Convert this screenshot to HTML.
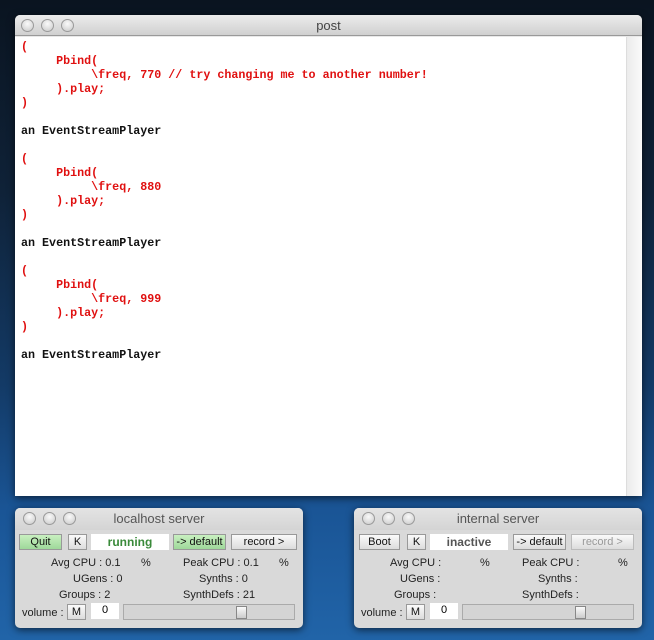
<!DOCTYPE html>
<html><head><meta charset="utf-8"><style>
*{margin:0;padding:0;box-sizing:border-box}
body{width:654px;height:640px;overflow:hidden;position:relative;font-family:"Liberation Sans",sans-serif;
background:linear-gradient(180deg,#0a1420 0%,#0f2238 30%,#133a66 60%,#1a5596 80%,#2164a8 100%);}
.win{position:absolute;background:#e8e8e8;border-radius:5px 5px 0 0;box-shadow:0 2px 8px rgba(0,0,0,.6)}
.tb{position:absolute;left:0;right:0;top:0;height:21px;background:linear-gradient(#ececec,#d0d0d0);border-radius:5px 5px 0 0;border-bottom:1px solid #999;text-align:center;font-size:13px;color:#444;line-height:21px}
.dot{position:absolute;top:4px;width:13px;height:13px;border-radius:50%;background:radial-gradient(circle at 50% 35%,#fafafa,#c8c8c8);border:1px solid #9a9a9a}
.code{position:absolute;left:0;top:22px;width:611px;bottom:0;background:#fff;font-family:"Liberation Mono",monospace;font-weight:bold;font-size:11.7px;line-height:14px;padding:3px 0 0 6px;white-space:pre}
.r{color:#e01010}.k{color:#111}
.sb{position:absolute;right:0;top:22px;width:16px;bottom:0;background:linear-gradient(90deg,#ececec,#fafafa);border-left:1px solid #ddd}
.srv{background:#d9d9d9;border-radius:5px;height:120px;width:288px}
.srv .tb{background:linear-gradient(#e4e4e4,#d4d4d4);border:none;height:22px;line-height:22px;font-size:13px;color:#555}
.b{position:absolute;height:16px;font-size:11px;line-height:15px;text-align:center;background:linear-gradient(#fafafa,#dcdcdc);border:1px solid #999;color:#111}
.g{background:linear-gradient(#c8f0c0,#9ed89a)}
.f{position:absolute;height:16px;background:#fff;font-size:12px;font-weight:bold;text-align:center;line-height:16px}
.t{position:absolute;font-size:11px;color:#222;line-height:12px}
.sl{position:absolute;height:16px;border:1px solid #aaa;background:#d4d4d4}
.kn{position:absolute;top:1px;width:11px;height:13px;background:linear-gradient(#fafafa,#ccc);border:1px solid #888}
</style></head><body>
<div class="win" style="left:15px;top:15px;width:627px;height:481px">
<div class="tb">post<span class="dot" style="left:6px"></span><span class="dot" style="left:26px"></span><span class="dot" style="left:46px"></span></div>
<div class="code"><span class="r">(
     Pbind(
          \freq, 770 // try changing me to another number!
     ).play;
)</span>

<span class="k">an EventStreamPlayer</span>

<span class="r">(
     Pbind(
          \freq, 880
     ).play;
)</span>

<span class="k">an EventStreamPlayer</span>

<span class="r">(
     Pbind(
          \freq, 999
     ).play;
)</span>

<span class="k">an EventStreamPlayer</span></div>
<div class="sb"></div>
</div>

<div class="win srv" style="left:15px;top:508px">
<div class="tb">localhost server<span class="dot" style="left:8px"></span><span class="dot" style="left:28px"></span><span class="dot" style="left:48px"></span></div>
<div class="b g" style="left:4px;top:26px;width:43px">Quit</div>
<div class="b" style="left:53px;top:26px;width:19px">K</div>
<div class="f" style="left:76px;top:26px;width:78px;color:#3a8a3a">running</div>
<div class="b g" style="left:158px;top:26px;width:53px">-&gt; default</div>
<div class="b" style="left:216px;top:26px;width:66px">record &gt;</div>
<div class="t" style="left:36px;top:49px">Avg CPU : 0.1</div><div class="t" style="left:126px;top:49px">%</div>
<div class="t" style="left:168px;top:49px">Peak CPU : 0.1</div><div class="t" style="left:264px;top:49px">%</div>
<div class="t" style="left:58px;top:65px">UGens : 0</div><div class="t" style="left:184px;top:65px">Synths : 0</div>
<div class="t" style="left:44px;top:81px">Groups : 2</div><div class="t" style="left:168px;top:81px">SynthDefs : 21</div>
<div class="t" style="left:7px;top:99px">volume :</div>
<div class="b" style="left:52px;top:96px;width:19px">M</div>
<div class="f" style="left:76px;top:95px;width:28px;font-weight:normal;font-size:11px;line-height:14px">0</div>
<div class="sl" style="left:108px;top:96px;width:172px"><div class="kn" style="left:112px"></div></div>
</div>

<div class="win srv" style="left:354px;top:508px">
<div class="tb">internal server<span class="dot" style="left:8px"></span><span class="dot" style="left:28px"></span><span class="dot" style="left:48px"></span></div>
<div class="b" style="left:5px;top:26px;width:41px">Boot</div>
<div class="b" style="left:53px;top:26px;width:19px">K</div>
<div class="f" style="left:76px;top:26px;width:78px;color:#555">inactive</div>
<div class="b" style="left:159px;top:26px;width:53px">-&gt; default</div>
<div class="b" style="left:217px;top:26px;width:63px;color:#999;border-color:#bbb">record &gt;</div>
<div class="t" style="left:36px;top:49px">Avg CPU :</div><div class="t" style="left:126px;top:49px">%</div>
<div class="t" style="left:168px;top:49px">Peak CPU :</div><div class="t" style="left:264px;top:49px">%</div>
<div class="t" style="left:46px;top:65px">UGens :</div><div class="t" style="left:184px;top:65px">Synths :</div>
<div class="t" style="left:40px;top:81px">Groups :</div><div class="t" style="left:168px;top:81px">SynthDefs :</div>
<div class="t" style="left:7px;top:99px">volume :</div>
<div class="b" style="left:52px;top:96px;width:19px">M</div>
<div class="f" style="left:76px;top:95px;width:28px;font-weight:normal;font-size:11px;line-height:14px">0</div>
<div class="sl" style="left:108px;top:96px;width:172px"><div class="kn" style="left:112px"></div></div>
</div>
</body></html>
